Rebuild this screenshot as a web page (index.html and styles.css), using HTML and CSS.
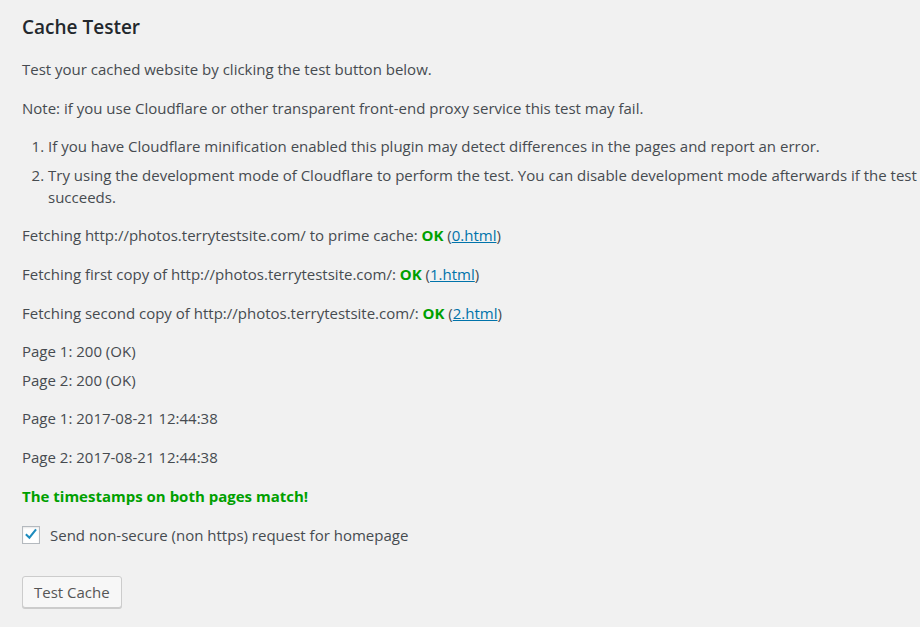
FILE: index.html
```html
<!DOCTYPE html>
<html lang="en">
<head>
    <meta charset="UTF-8">
    <title>Cache Tester</title>
    <link rel="stylesheet" href="styles.css">
</head>
<body>
    <div class="wrap">
        <h2>Cache Tester</h2>
        <p>Test your cached website by clicking the test button below.</p>
        <p>Note: if you use Cloudflare or other transparent front-end proxy service this test may fail.</p>
        <ol>
            <li>If you have Cloudflare minification enabled this plugin may detect differences in the pages and report an error.</li>
            <li>Try using the development mode of Cloudflare to perform the test. You can disable development mode afterwards if the test succeeds.</li>
        </ol>
        <p>Fetching http://photos.terrytestsite.com/ to prime cache: <span class="ok">OK</span> (<a href="#">0.html</a>)</p>
        <p>Fetching first copy of http://photos.terrytestsite.com/: <span class="ok">OK</span> (<a href="#">1.html</a>)</p>
        <p>Fetching second copy of http://photos.terrytestsite.com/: <span class="ok">OK</span> (<a href="#">2.html</a>)</p>
        <ul class="status">
            <li>Page 1: 200 (OK)</li>
            <li>Page 2: 200 (OK)</li>
        </ul>
        <p>Page 1: 2017-08-21 12:44:38</p>
        <p>Page 2: 2017-08-21 12:44:38</p>
        <p class="match">The timestamps on both pages match!</p>
        <label class="check">
            <span class="box">
                <svg viewBox="0 0 20 20"><path d="M4.5 10.5 L8 14 L15.5 4.5" fill="none" stroke="#1e8cbe" stroke-width="2.6" stroke-linecap="square"/></svg>
            </span>
            Send non-secure (non https) request for homepage
        </label>
        <div class="actions">
            <button class="button">Test Cache</button>
        </div>
    </div>
</body>
</html>
```

FILE: styles.css
```css
html, body {
    margin: 0;
    padding: 0;
    background: #f1f1f1;
}
body {
    font-family: "Open Sans", "Noto Sans", sans-serif;
    font-size: 15px;
    line-height: 22px;
    color: #464b50;
}
.wrap {
    padding: 12px 0 12px 22px;
}
h2 {
    font-size: 19px;
    font-weight: 600;
    color: #23282d;
    margin: 2px 0 18px;
    line-height: 26px;
}
p {
    margin: 0 0 16.7px;
}
ol {
    margin: 0 0 16px;
    padding-left: 26px;
}
ol li {
    margin-bottom: 7px;
}
.status {
    list-style: none;
    margin: 0 0 16px;
    padding: 0;
}
.status li {
    margin-bottom: 7px;
}
.ok {
    color: #00a000;
    font-weight: 700;
}
a {
    color: #0073aa;
    text-decoration: underline;
}
.match {
    color: #00a000;
    font-weight: 700;
}
.check {
    display: flex;
    align-items: center;
    gap: 10px;
    margin-bottom: 30px;
}
.box {
    width: 16px;
    height: 16px;
    border: 1px solid #b4b9be;
    background: #fff;
    box-shadow: inset 0 1px 2px rgba(0, 0, 0, 0.1);
    display: flex;
    align-items: center;
    justify-content: center;
}
.box svg {
    width: 17px;
    height: 17px;
}
.button {
    font-family: inherit;
    font-size: 15px;
    color: #555;
    background: #f7f7f7;
    border: 1px solid #ccc;
    border-radius: 3px;
    box-shadow: 0 1px 0 #ccc;
    padding: 0 11px;
    height: 32px;
    line-height: 30px;
}
```
